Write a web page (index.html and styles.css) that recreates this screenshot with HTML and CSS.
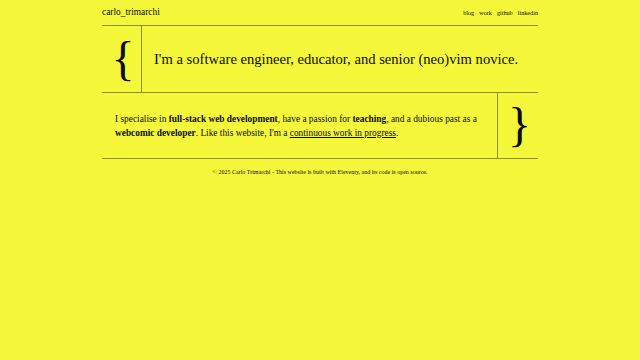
FILE: index.html
```html
<!doctype html>
<html lang="en">
    <head>
        <title>carlo_trimarchi</title>
        <link rel="stylesheet" href="styles.css">
    </head>
    <body>
        <div class="page">
            <header class="site-header">
                <a class="logo" href="#">carlo_trimarchi</a>
                <nav class="nav">
                    <a href="#">blog</a>
                    <a href="#">work</a>
                    <a href="#">github</a>
                    <a href="#">linkedin</a>
                </nav>
            </header>

            <section class="intro">
                <div class="brace brace-left">{</div>
                <h1 class="tagline">I'm a software engineer, educator, and senior (neo)vim novice.</h1>
            </section>

            <section class="about">
                <p class="about-text">
                    I specialise in <strong>full-stack web development</strong>, have a passion for
                    <strong>teaching</strong>, and a dubious past as a <strong>webcomic developer</strong>.
                    Like this website, I'm a <a href="#">continuous work in progress</a>.
                </p>
                <div class="brace brace-right">}</div>
            </section>

            <footer class="site-footer">
                © 2025 Carlo Trimarchi - This website is built with <a href="#">Eleventy</a>, and
                <a href="#">its code is open source</a>.
            </footer>
        </div>
    </body>
</html>
```

FILE: styles.css
```css
body {
    font-family: "Liberation Serif", "Times New Roman", serif;
    background: #f4f73a;
    color: #0d0d05;
    margin: 0;
    padding: 0;
}
a {
    color: inherit;
}
.page {
    width: 436px;
    margin: 0 auto;
}
.site-header {
    display: flex;
    justify-content: space-between;
    align-items: center;
    height: 25px;
    border-bottom: 1px solid #8e8f22;
}
.logo {
    font-size: 9.4px;
    text-decoration: none;
    padding-bottom: 1px;
}
.nav {
    display: flex;
    gap: 5px;
    font-size: 6.2px;
    padding-bottom: 1px;
}
.nav a {
    text-decoration: none;
}
.intro {
    display: grid;
    grid-template-columns: 40px 1fr;
    height: 66px;
    border-bottom: 1px solid #8e8f22;
}
.intro .brace {
    border-right: 1px solid #8e8f22;
}
.brace {
    display: flex;
    align-items: center;
    justify-content: center;
    font-size: 48px;
    line-height: 1;
}
.brace-left {
    padding-left: 3px;
}
.tagline {
    margin: 0;
    padding-left: 12px;
    font-size: 14.6px;
    font-weight: normal;
    display: flex;
    align-items: center;
    padding-top: 1px;
}
.about {
    display: grid;
    grid-template-columns: 1fr 41px;
    height: 65px;
    border-bottom: 1px solid #8e8f22;
}
.about .brace {
    border-left: 1px solid #8e8f22;
    padding-left: 3px;
    padding-bottom: 2px;
}
.about-text {
    margin: 0;
    padding: 0 8px 0 13px;
    font-size: 9.35px;
    line-height: 14px;
    align-self: center;
}
.site-footer {
    text-align: center;
    font-size: 6px;
    padding-top: 10px;
}
```
